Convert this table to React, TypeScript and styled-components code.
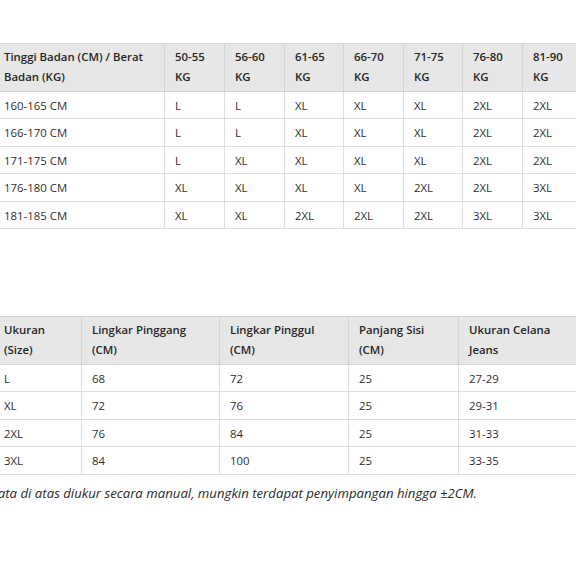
import React from 'react';
import styled, { createGlobalStyle } from 'styled-components';

const GlobalStyle = createGlobalStyle`
  html, body {
    margin: 0;
    padding: 0;
    background: #fff;
    overflow: hidden;
  }
  body {
    font-family: 'Open Sans', 'Noto Sans', sans-serif;
    color: #333;
  }
`;

const Page = styled.div`
  width: 700px;
  margin-left: -7px;
  padding-top: 43px;
`;

const Table = styled.table<{ $gap?: number }>`
  border-collapse: collapse;
  table-layout: fixed;
  margin-top: ${(p) => p.$gap ?? 0}px;
  font-size: 11.4px;
`;

const HeadCell = styled.th`
  background: #e7e7e7;
  border: 1px solid #d4d4d4;
  font-weight: 600;
  text-align: left;
  vertical-align: top;
  line-height: 20px;
  padding: 3px 10px 4px;
  color: #262626;
`;

const Cell = styled.td`
  border: 1px solid #dedede;
  line-height: 19.4px;
  padding: 4px 10px 3px;
  color: #2f2f2f;
`;

const Note = styled.p`
  margin: 8px 0 0 -4px;
  font-size: 13.2px;
  font-style: italic;
  line-height: 20px;
  color: #2a2a2a;
  white-space: nowrap;
`;

const weightCols = [171, 60, 60, 59, 60, 59, 60, 80];
const weights = ['50-55 KG', '56-60 KG', '61-65 KG', '66-70 KG', '71-75 KG', '76-80 KG', '81-90 KG'];
const heights: [string, string[]][] = [
  ['160-165 CM', ['L', 'L', 'XL', 'XL', 'XL', '2XL', '2XL']],
  ['166-170 CM', ['L', 'L', 'XL', 'XL', 'XL', '2XL', '2XL']],
  ['171-175 CM', ['L', 'XL', 'XL', 'XL', 'XL', '2XL', '2XL']],
  ['176-180 CM', ['XL', 'XL', 'XL', 'XL', '2XL', '2XL', '3XL']],
  ['181-185 CM', ['XL', 'XL', '2XL', '2XL', '2XL', '3XL', '3XL']],
];

const sizeCols = [88, 138, 129, 110, 150];
const sizeHead = [
  ['Ukuran', '(Size)'],
  ['Lingkar Pinggang', '(CM)'],
  ['Lingkar Pinggul', '(CM)'],
  ['Panjang Sisi', '(CM)'],
  ['Ukuran Celana', 'Jeans'],
];
const sizes = [
  ['L', '68', '72', '25', '27-29'],
  ['XL', '72', '76', '25', '29-31'],
  ['2XL', '76', '84', '25', '31-33'],
  ['3XL', '84', '100', '25', '33-35'],
];

const App = () => (
  <>
    <GlobalStyle />
    <Page>
      <Table style={{ width: weightCols.reduce((a, b) => a + b, 0) }}>
        <colgroup>
          {weightCols.map((w, i) => (
            <col key={i} style={{ width: w }} />
          ))}
        </colgroup>
        <thead>
          <tr>
            <HeadCell>
              Tinggi Badan (CM) / Berat
              <br />
              Badan (KG)
            </HeadCell>
            {weights.map((w) => (
              <HeadCell key={w}>
                {w.split(' ')[0]}
                <br />
                KG
              </HeadCell>
            ))}
          </tr>
        </thead>
        <tbody>
          {heights.map(([h, row]) => (
            <tr key={h}>
              <Cell>{h}</Cell>
              {row.map((s, i) => (
                <Cell key={i}>{s}</Cell>
              ))}
            </tr>
          ))}
        </tbody>
      </Table>

      <Table $gap={87} style={{ width: sizeCols.reduce((a, b) => a + b, 0) }}>
        <colgroup>
          {sizeCols.map((w, i) => (
            <col key={i} style={{ width: w }} />
          ))}
        </colgroup>
        <thead>
          <tr>
            {sizeHead.map(([a, b]) => (
              <HeadCell key={a}>
                {a}
                <br />
                {b}
              </HeadCell>
            ))}
          </tr>
        </thead>
        <tbody>
          {sizes.map((row) => (
            <tr key={row[0]}>
              {row.map((v, i) => (
                <Cell key={i}>{v}</Cell>
              ))}
            </tr>
          ))}
        </tbody>
      </Table>

      <Note>Data di atas diukur secara manual, mungkin terdapat penyimpangan hingga ±2CM.</Note>
    </Page>
  </>
);

export default App;
